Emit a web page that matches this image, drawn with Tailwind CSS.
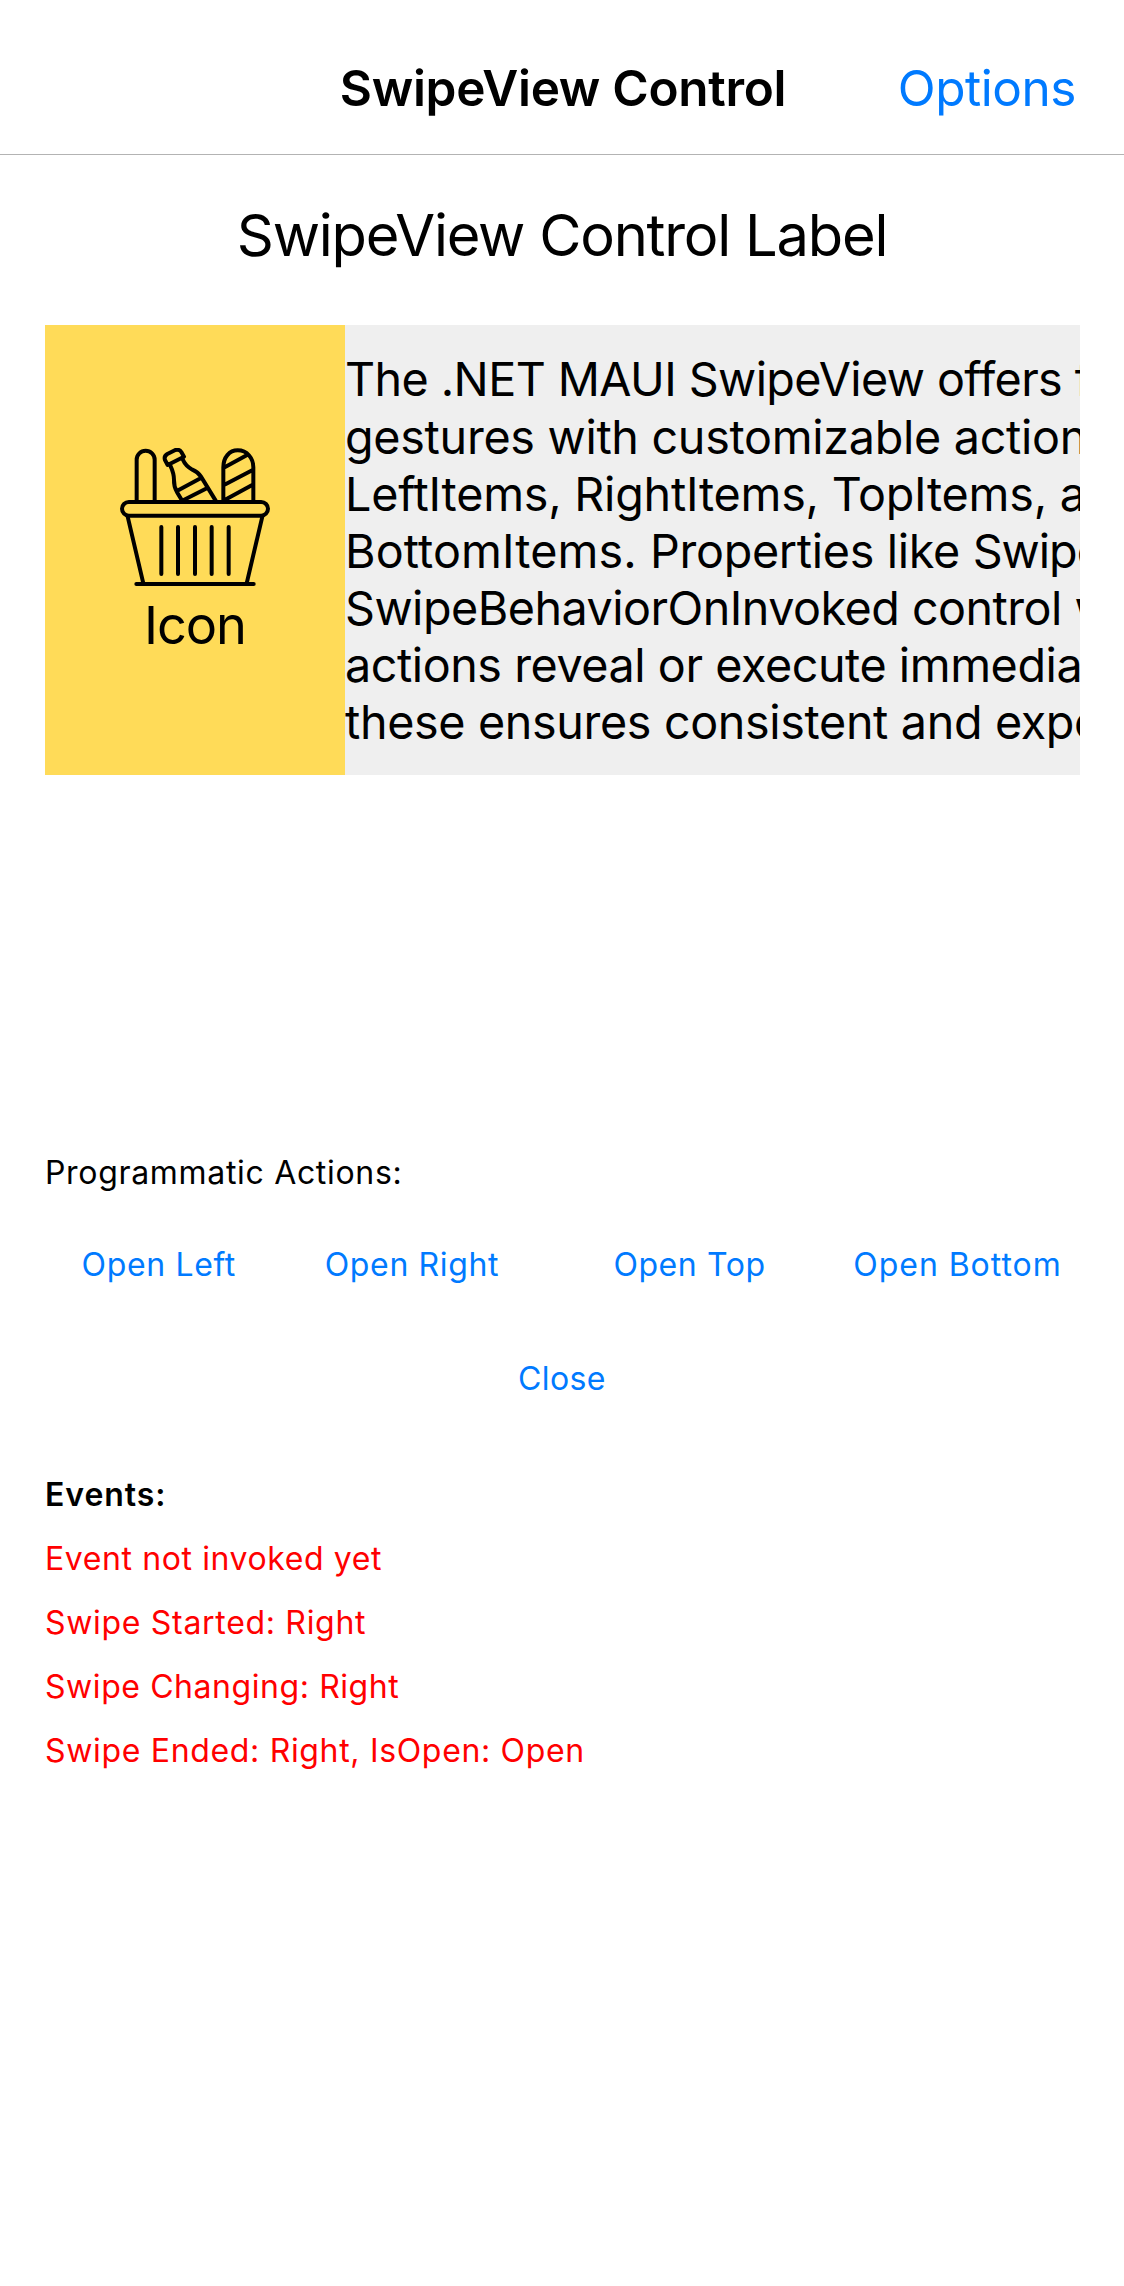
<!DOCTYPE html>
<html lang="en">
<head>
<meta charset="utf-8">
<title>SwipeView Control</title>
<script src="https://cdn.jsdelivr.net/npm/@tailwindcss/browser@4"></script>
</head>
<body class="min-h-screen overflow-x-hidden bg-white font-[Inter,sans-serif] text-black">
<header class="grid h-[155px] grid-cols-[1fr_auto_1fr] items-center border-b border-[#b3b3b3] pt-[22px] text-[49.5px] leading-[64px]">
  <span></span>
  <h1 class="pl-0.5 font-semibold tracking-[-0.3px]">SwipeView Control</h1>
  <button class="justify-self-end pr-12 tracking-[-0.46px] text-[#007aff]">Options</button>
</header>
<main class="px-[45px]">
  <h2 class="mt-[44px] whitespace-nowrap text-center text-[57.8px] leading-[72px] tracking-[-1.22px]">SwipeView Control Label</h2>

  <section class="mt-[54px] flex h-[450px] w-[1035px] overflow-hidden bg-[#efefef]">
    <div class="flex w-[300px] shrink-0 flex-col items-center justify-center gap-[7px] bg-[#ffdb58] pt-[5px]">
      <svg class="h-[138px] w-[150px]" viewBox="60 54 450 414" fill="none" stroke="#000" stroke-width="12" stroke-linecap="round" stroke-linejoin="round">
        <!-- basket handle -->
        <path d="M110 214V89a27 27 0 0 1 54 0V214"/>
        <!-- bottle -->
        <path d="M203 105L195 90Q191 79 202 72L226 60Q238 57 244 66L252 80Z"/>
        <path d="M211 107C220 126 222 136 222 150C221 168 225 176 232 188L247 213M248 88C254 102 263 112 277 119C291 125 296 129 303 140L347 212M232 182L303 144M251 210L322 174"/>
        <!-- bread -->
        <path d="M370 214V112C370 82 388 61 413 61C442 61 460 85 460 112V214M374 112L440 76M372 165L458 120M374 210L458 164"/>
        <!-- basket -->
        <rect x="66" y="216" width="438" height="41" rx="20.5"/>
        <path d="M83 260L130 460M487 260L440 460M109 462H461"/>
        <path d="M184 291V432M234 291V432M285 291V432M335 291V432M386 291V432"/>
      </svg>
      <span class="text-[52.3px] leading-[64px] tracking-[-1.09px]">Icon</span>
    </div>
    <div class="flex min-w-0 flex-col justify-center whitespace-nowrap pt-[3px] text-[46.7px] leading-[57.17px]">
      <p class="tracking-[-0.59px]">The .NET MAUI SwipeView offers flexible</p>
      <p class="tracking-[-0.3px]">gestures with customizable actions</p>
      <p class="tracking-[-0.24px]">LeftItems, RightItems, TopItems, and</p>
      <p class="tracking-[-0.33px]"><span class="tracking-[0.1px]">BottomItems. </span>Properties like <span class="tracking-[-1px]">SwipeMode</span></p>
      <p class="tracking-[-0.52px]">SwipeBehaviorOnInvoked control whether</p>
      <p class="tracking-[-0.45px]">actions reveal or execute immediately</p>
      <p class="tracking-[-0.36px]">these ensures consistent and expected</p>
    </div>
  </section>

  <section class="mt-[378px] text-[32px] leading-10">
    <p class="tracking-[0.68px]">Programmatic Actions:</p>
    <div class="mt-[15px] grid w-[1041px] grid-cols-[227.5px_279px_276px_259px] text-[#007aff]">
      <button class="h-[114px] tracking-[0.65px]">Open Left</button>
      <button class="h-[114px] tracking-[0.65px]">Open Right</button>
      <button class="h-[114px] tracking-[0.58px]">Open Top</button>
      <button class="h-[114px] pl-px tracking-[0.95px]">Open Bottom</button>
    </div>
    <button class="block h-[114px] w-full tracking-[0.4px] text-[#007aff]">Close</button>
  </section>

  <section class="mt-[27px] text-[32px] leading-[64px] text-[#ff0000]">
    <h3 class="font-semibold tracking-[0.95px] text-black">Events:</h3>
    <p class="tracking-[0.6px]">Event not invoked yet</p>
    <p class="tracking-[0.69px]">Swipe Started: Right</p>
    <p class="tracking-[0.57px]">Swipe Changing: Right</p>
    <p class="tracking-[0.67px]">Swipe Ended: Right, IsOpen: Open</p>
  </section>
</main>
</body>
</html>
